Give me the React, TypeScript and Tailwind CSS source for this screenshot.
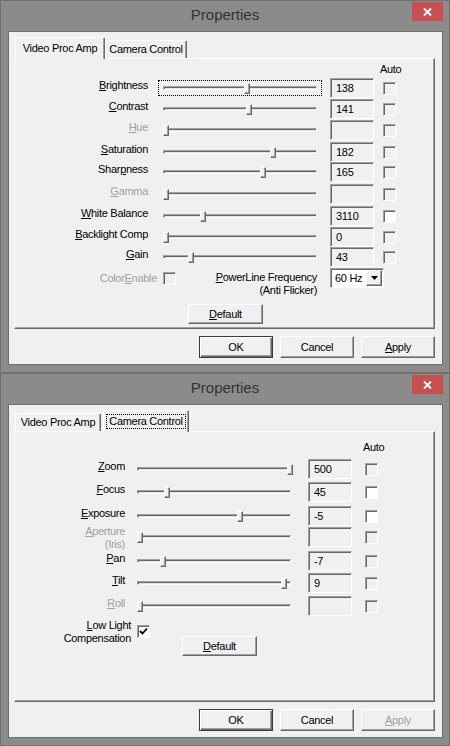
import React from 'react';

type SRow = {
  label: string;
  u: number;
  label2?: string;
  value: string;
  left: number;
  on: boolean;
  white?: boolean;
  h: string;
  focus?: boolean;
};

type Lay = { label: string; slider: string; box: string; check: string; track: number };

const ampRows: SRow[] = [
  { label: 'Brightness', u: 0, value: '138', left: 244, on: true, h: 'h-[21px]', focus: true },
  { label: 'Contrast', u: 0, value: '141', left: 246, on: true, h: 'h-[21px]' },
  { label: 'Hue', u: 0, value: '', left: 163, on: false, h: 'h-[22px]' },
  { label: 'Saturation', u: 0, value: '182', left: 270, on: true, h: 'h-[20px]' },
  { label: 'Sharpness', u: 4, value: '165', left: 260, on: true, h: 'h-[22px]' },
  { label: 'Gamma', u: 0, value: '', left: 163, on: false, h: 'h-[22px]' },
  { label: 'White Balance', u: 0, value: '3110', left: 200, on: true, white: true, h: 'h-[21px]' },
  { label: 'Backlight Comp', u: 0, value: '0', left: 163, on: true, h: 'h-[20px]' },
  { label: 'Gain', u: 0, value: '43', left: 188, on: true, h: 'h-[20px]' },
];

const camRows: SRow[] = [
  { label: 'Zoom', u: 0, value: '500', left: 287, on: true, h: 'h-[23px]' },
  { label: 'Focus', u: 0, value: '45', left: 164, on: true, white: true, h: 'h-[24px]' },
  { label: 'Exposure', u: 0, value: '-5', left: 237, on: true, white: true, h: 'h-[21px]' },
  { label: 'Aperture', u: 0, label2: '(Iris)', value: '', left: 137, on: false, h: 'h-[24px]' },
  { label: 'Pan', u: 0, value: '-7', left: 160, on: true, h: 'h-[22px]' },
  { label: 'Tilt', u: 0, value: '9', left: 281, on: true, h: 'h-[23px]' },
  { label: 'Roll', u: 0, value: '', left: 137, on: false, h: 'h-[20px]' },
];

const ampLay: Lay = { label: 'w-[133px]', slider: 'ml-[10px]', box: 'ml-[8px]', check: 'ml-[9px]', track: 163 };
const camLay: Lay = { label: 'w-[110px]', slider: 'ml-[7px]', box: 'ml-[12px]', check: 'ml-[13px]', track: 137 };

const raised =
  'border border-t-white border-l-white border-r-[#696969] border-b-[#696969] shadow-[inset_-1px_-1px_#a0a0a0] bg-[#f0f0f0]';
const sunken =
  'border border-t-[#a0a0a0] border-l-[#a0a0a0] border-r-white border-b-white shadow-[inset_1px_1px_#696969]';

function Acc({ text, u }: { text: string; u: number }) {
  return (
    <>
      {text.slice(0, u)}
      <span className="underline underline-offset-[1px]">{text[u]}</span>
      {text.slice(u + 1)}
    </>
  );
}

function Check({ white, checked }: { white?: boolean; checked?: boolean }) {
  return (
    <div className={`w-[13px] h-[13px] ${sunken} ${white ? 'bg-white' : 'bg-[#f0f0f0]'} flex items-center justify-center`}>
      {checked && (
        <svg width="9" height="9" viewBox="0 0 9 9">
          <path d="M1 4 L3.5 6.5 L8 1.5" fill="none" stroke="#000" strokeWidth="1.8" />
        </svg>
      )}
    </div>
  );
}

function SliderRow({ r, lay }: { r: SRow; lay: Lay }) {
  return (
    <div className={`${r.h} flex items-start`}>
      <div className="h-[20px] flex items-center">
        <div
          className={`${lay.label} self-start text-right leading-[13px] ${r.label2 ? '-mt-[2px]' : 'mt-px'} ${
            r.on ? 'text-black' : 'text-[#a0a0a0]'
          }`}
        >
          <Acc text={r.label} u={r.u} />
          {r.label2 && (
            <>
              <br />
              {r.label2}
            </>
          )}
        </div>
        <div
          className={`${lay.slider} w-[164px] h-[16px] px-[4px] flex items-center border ${
            r.focus ? 'border-dotted border-black' : 'border-transparent'
          }`}
        >
          <div className="relative flex-1 h-[4px] border border-t-[#a0a0a0] border-l-[#a0a0a0] border-r-white border-b-white shadow-[inset_1px_1px_#696969,inset_-1px_-1px_#e3e3e3]">
            <div className={`absolute -top-[4px] w-[6px] h-[11px] ${raised}`} style={{ left: r.left - lay.track - 1 }} />
          </div>
        </div>
        <div className={`${lay.box} self-start w-[44px] h-[20px] pl-[5px] flex items-center leading-[14px] ${sunken} bg-[#f0f0f0]`}>
          {r.value}
        </div>
        <div className={lay.check}>
          <Check white={r.white} />
        </div>
      </div>
    </div>
  );
}

function Btn({ label, u, def, disabled, h = 'h-[22px]', w = 'w-[74px]' }: { label: string; u: number; def?: boolean; disabled?: boolean; h?: string; w?: string }) {
  const frame = def
    ? 'border border-[#3c3c3c] shadow-[inset_1px_1px_#fff,inset_-1px_-1px_#696969,inset_-2px_-2px_#a0a0a0] bg-[#f0f0f0]'
    : raised;
  return (
    <div className={`${w} ${h} ${frame} flex items-center justify-center leading-[13px] ${disabled ? 'text-[#a0a0a0]' : 'text-black'}`}>
      {u >= 0 ? <Acc text={label} u={u} /> : label}
    </div>
  );
}

type Tab = { text: string; sel: boolean; w: string; ml?: string; focus?: boolean };

function Win({ tabs, applyDisabled, children }: { tabs: Tab[]; applyDisabled?: boolean; children: React.ReactNode }) {
  return (
    <div className="relative w-[450px] h-[373px] border border-[#707070] bg-[#8b8b8b] flex flex-col">
      <div className="relative h-[30px] flex items-center justify-center pb-[2px]">
        <span className="text-[15px] text-[#333] tracking-normal">Properties</span>
        <div className="absolute top-[1px] right-[6px] w-[31px] h-[19px] bg-[#c75050] flex items-center justify-center">
          <svg width="9" height="8" viewBox="0 0 9 8">
            <path d="M1 0.5 L8 7.5 M8 0.5 L1 7.5" stroke="#fff" strokeWidth="1.9" />
          </svg>
        </div>
      </div>
      <div className="ml-[7px] w-[435px] h-[334px] border border-[#6e6e6e] bg-[#f0f0f0] pl-[5px] pt-[5px]">
        <div className="h-[21px] pl-[1px] flex items-end">
          {tabs.map((t) => (
            <div
              key={t.text}
              className={`${t.w} ${t.ml ?? ''} flex items-center justify-center rounded-t-[2px] border border-b-0 border-t-white border-l-white border-r-[#696969] shadow-[inset_-1px_0_#a0a0a0] bg-[#f0f0f0] ${
                t.sel ? 'relative z-10 h-[22px] -mb-px' : 'h-[18px]'
              }`}
            >
              <span className={`px-[2px] h-[15px] flex items-center border ${t.focus ? 'border-dotted border-black' : 'border-transparent'}`}>
                {t.text}
              </span>
            </div>
          ))}
        </div>
        <div className={`w-[421px] h-[271px] ${raised}`}>{children}</div>
        <div className="mt-[7px] w-[421px] flex justify-end gap-[7px]">
          <Btn label="OK" u={-1} def />
          <Btn label="Cancel" u={-1} />
          <Btn label="Apply" u={0} disabled={applyDisabled} />
        </div>
      </div>
    </div>
  );
}

export default function App() {
  return (
    <div className="w-[450px] h-[746px] flex flex-col text-[11px] tracking-[-0.3px] text-black font-['Liberation_Sans',Arial,sans-serif]">
      <Win
        tabs={[
          { text: 'Video Proc Amp', sel: true, w: 'w-[90px]' },
          { text: 'Camera Control', sel: false, w: 'w-[82px]' },
        ]}
      >
        <div className="h-[19px] pt-[4px] pl-[365px] leading-[13px]">Auto</div>
        {ampRows.map((r) => (
          <SliderRow key={r.label} r={r} lay={ampLay} />
        ))}
        <div className="h-[37px] flex items-start">
          <div className="w-[142px] mt-[5px] text-right leading-[13px] text-[#a0a0a0]">
            <Acc text="ColorEnable" u={5} />
          </div>
          <div className="ml-[6px] mt-[5px]">
            <Check />
          </div>
          <div className="w-[141px] mt-[4px] text-right leading-[13px]">
            <Acc text="PowerLine Frequency" u={0} />
            <br />
            (Anti Flicker)
          </div>
          <div className={`ml-[13px] mt-[1px] w-[54px] h-[20px] ${sunken} bg-white flex items-center justify-between pl-[4px] pr-[1px] leading-[13px]`}>
            <span>60 Hz</span>
            <div className={`w-[16px] h-[16px] ${raised} flex items-center justify-center`}>
              <svg width="7" height="4" viewBox="0 0 7 4">
                <path d="M0 0 H7 L3.5 4 Z" fill="#000" />
              </svg>
            </div>
          </div>
        </div>
        <div className="pl-[173px]">
          <Btn label="Default" u={0} w="w-[75px]" h="h-[20px]" />
        </div>
      </Win>
      <Win
        applyDisabled
        tabs={[
          { text: 'Video Proc Amp', sel: false, w: 'w-[86px]' },
          { text: 'Camera Control', sel: true, w: 'w-[86px]', ml: 'ml-[2px]', focus: true },
        ]}
      >
        <div className="h-[27px] pt-[9px] pl-[348px] leading-[13px]">Auto</div>
        {camRows.map((r) => (
          <SliderRow key={r.label} r={r} lay={camLay} />
        ))}
        <div className="flex items-start">
          <div className="w-[116px] mt-[3px] text-right leading-[13px]">
            <Acc text="Low Light" u={0} />
            <br />
            Compensation
          </div>
          <div className="ml-[6px] mt-[9px]">
            <Check white checked />
          </div>
          <div className="ml-[32px] mt-[20px]">
            <Btn label="Default" u={0} w="w-[75px]" h="h-[20px]" />
          </div>
        </div>
      </Win>
    </div>
  );
}
